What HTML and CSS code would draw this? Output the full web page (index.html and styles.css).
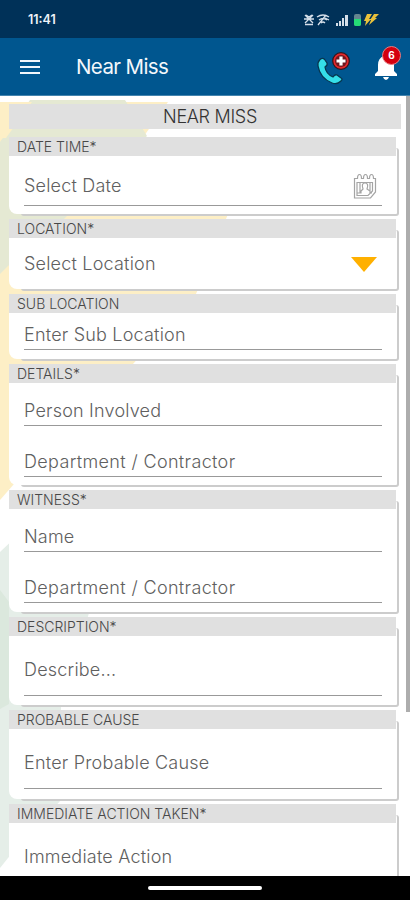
FILE: index.html
```html
<!DOCTYPE html>
<html lang="en">
<head>
    <meta charset="UTF-8">
    <meta name="viewport" content="width=device-width, initial-scale=1.0">
    <title>Near Miss</title>
    <link rel="stylesheet" href="styles.css">
</head>
<body>
    <div class="status-bar">
        <span class="clock">11:41</span>
        <svg class="status-icons" width="78" height="16" viewBox="0 0 78 16">
            <g fill="none" stroke="#d5dfe9" stroke-width="1.3">
                <path d="M3 3l8 8M11 3l-8 8M2 7h10M3 12.500h8M4 3l3 2 3-2"/>
                <path d="M15 5q6-4 12 0M17 8q4-3 8 0M19 11q2-2 4 0M16 13l8-10M23 6l4 2"/>
            </g>
            <path fill="#d5dfe9" d="M34 11h2v3h-2zM37 9h2v5h-2zM40 6h2v8h-2zM43 3h3v11h-3z"/>
            <rect x="52" y="2" width="7" height="12" rx="2" fill="#64858f"/>
            <path fill="#25dc75" d="M52 7h7v5q0 2-2 2h-3q-2 0-2-2z"/>
            <path fill="#eac23b" d="M65 2h5l-3 5h2l-6 7 1-5h-2zM72 2h5l-4 4h2l-8 7 2-5h-1z"/>
        </svg>
    </div>
    <header class="app-bar">
        <svg class="menu" width="20" height="16" viewBox="0 0 20 16">
            <path d="M0 2h20M0 8h20M0 14h20" stroke="#f1f6fb" stroke-width="2"/>
        </svg>
        <h1>Near Miss</h1>
        <svg class="phone" width="36" height="36" viewBox="0 0 36 36">
            <path d="M4 9.500Q7 7 9 10l2 3q1 2-2 4 1 7 8 10 2-3 4-2l4 3q2 1 0 3-4 4-9 2Q4 28 2 16q-.5-4 2-6.500z" fill="#35dfe8" stroke="#07364f" stroke-width="1.300"/>
            <circle cx="25" cy="11" r="8.300" fill="#e4282b" stroke="#35141c" stroke-width="1.200"/>
            <circle cx="25" cy="11" r="6" fill="#6f1720"/>
            <path d="M25 6.500v9M20.500 11h9" stroke="#fff" stroke-width="3.200"/>
        </svg>
        <div class="bell">
            <svg width="24" height="27" viewBox="0 0 24 27">
                <path d="M12 1q-2 0-2 2Q4 5 4 12v6l-3 3v2h22v-2l-3-3v-6q0-7-6-9 0-2-2-2zM9 24h6q-1 3-3 3t-3-3z" fill="#fff"/>
            </svg>
            <span class="badge">6</span>
        </div>
    </header>
    <main>
        <svg class="backdrop" width="410" height="780" viewBox="0 0 410 780">
            <path d="M0 6h168l-24 34 84 78-32 80-63 70L14 388 0 404z" fill="#fdefc6"/>
            <path d="M0 46L30 4h95l22 36-85 85L8 170 0 178z" fill="#e5e9d3"/>
            <path d="M0 6h32L6 42H0z" fill="#fdefc6"/>
            <path d="M0 456l18-17h48l23 78-28 92v95L8 762 0 772z" fill="#e5eee8"/>
            <path d="M0 494l9 12v102l-9 5z" fill="#dbe8dd"/>
        </svg>
        <div class="form">
            <h2>NEAR MISS</h2>
            <section class="card date">
                <h3>DATE TIME*</h3>
                <div class="field">
                    Select Date
                    <svg width="24" height="26" viewBox="0 0 24 26" fill="none" stroke="#a4a4a4" stroke-width="1.200">
                        <path d="M1.500 5.500h3q0-4 2-4t2 4h2q0-4 2-4t2 4h2q0-4 2-4t2 4h2V19l-5 6h-16z"/>
                        <path d="M4 9.500h15.500V18L15 22.500H4zM4 20h4v-2l2-2q-2-6 2-6t2 6l3 2v2h2M7 10v10M17 10v8"/>
                    </svg>
                </div>
            </section>
            <section class="card location">
                <h3>LOCATION*</h3>
                <div class="field">Select Location <span class="arrow"></span></div>
            </section>
            <section class="card sub">
                <h3>SUB LOCATION</h3>
                <div class="field">Enter Sub Location</div>
            </section>
            <section class="card person">
                <h3>DETAILS*</h3>
                <div class="field">Person Involved</div>
                <div class="field">Department / Contractor</div>
            </section>
            <section class="card person">
                <h3>WITNESS*</h3>
                <div class="field">Name</div>
                <div class="field">Department / Contractor</div>
            </section>
            <section class="card text">
                <h3>DESCRIPTION*</h3>
                <div class="field">Describe...</div>
            </section>
            <section class="card text">
                <h3>PROBABLE CAUSE</h3>
                <div class="field">Enter Probable Cause</div>
            </section>
            <section class="card text">
                <h3>IMMEDIATE ACTION TAKEN*</h3>
                <div class="field">Immediate Action</div>
            </section>
        </div>
        <div class="scrollbar"></div>
    </main>
    <footer class="nav-bar"><span></span></footer>
</body>
</html>
```
FILE: styles.css
```css
* {
    box-sizing: border-box;
}
body {
    margin: 0;
    height: 900px;
    display: flex;
    flex-direction: column;
    overflow: hidden;
    font-family: Inter, sans-serif;
    background: #fff;
}
h1, h2, h3 {
    margin: 0;
    font-weight: 400;
}
.status-bar {
    height: 38px;
    flex: none;
    display: flex;
    justify-content: space-between;
    align-items: center;
    padding: 1px 30px 0 28px;
    background: #003158;
}
.clock {
    color: #eef3f8;
    font-size: 12.5px;
    font-weight: 600;
}
.app-bar {
    height: 58px;
    flex: none;
    display: flex;
    align-items: center;
    padding: 0 12px 0 20px;
    background: #00568f;
    border-bottom: 1px solid #4384ae;
}
.app-bar h1 {
    margin-left: 36px;
    flex: 1;
    color: #f4f8fc;
    font-size: 20.5px;
    letter-spacing: -0.6px;
}
.phone {
    margin-top: 2px;
}
.bell {
    position: relative;
    height: 27px;
    margin-left: 22px;
}
.badge {
    position: absolute;
    top: -7px;
    left: 8px;
    width: 19px;
    height: 19px;
    border: 1px solid #e87b80;
    border-radius: 50%;
    background: #d4000e;
    color: #fff;
    font-size: 10px;
    font-weight: 700;
    line-height: 17px;
    text-align: center;
}
main {
    position: relative;
    flex: 1;
    min-height: 0;
    overflow: hidden;
}
.backdrop {
    position: absolute;
    top: 0;
    left: 0;
}
.form {
    position: relative;
    z-index: 0;
    padding: 8px 9px 0;
}
.form h2 {
    height: 25px;
    margin-bottom: 8px;
    padding-left: 10px;
    background: #e0e0e0;
    color: #333;
    font-size: 18px;
    font-weight: 300;
    line-height: 25px;
    text-align: center;
    letter-spacing: -0.3px;
}
.card {
    position: relative;
    width: 387px;
    margin-bottom: 5px;
    border-radius: 0 0 8px 8px;
    background: #fff;
}
/* thin offset edge on the right and bottom */
.card::after {
    content: "";
    position: absolute;
    z-index: -1;
    top: 11px;
    left: 12px;
    right: -3px;
    bottom: -2px;
    border: solid rgba(0, 0, 0, 0.2);
    border-width: 0 2px 2px 0;
    border-radius: 3px;
    background: #fff;
}
.card h3 {
    height: 19px;
    padding-left: 8px;
    background: #e0e0e0;
    color: #484848;
    font-size: 14px;
    line-height: 19px;
    font-weight: 300;
}
.field {
    display: flex;
    justify-content: space-between;
    margin: 0 14px 0 15px;
    border-bottom: 1px solid #999;
    color: #606060;
    font-size: 18px;
    font-weight: 300;
    line-height: 26px;
    letter-spacing: 0.2px;
}
.date {
    height: 77px;
}
.date .field {
    padding: 17px 5px 6px 0;
}
.location {
    height: 69.5px;
}
.location .field {
    border: none;
    padding: 13px 5px 0 0;
    align-items: center;
}
.arrow {
    border: 13px solid transparent;
    border-top: 15px solid #ffb000;
    border-bottom: none;
}
.sub {
    height: 65px;
}
.sub .field {
    padding: 9.5px 0 1px;
}
.person {
    height: 121.5px;
}
.person .field {
    padding: 15px 0 1px;
}
.person .field + .field {
    padding-top: 23px;
    letter-spacing: 0.35px;
}
.text {
    height: 88.5px;
}
.text .field {
    padding: 21px 0 12px;
}
.scrollbar {
    position: absolute;
    top: 0;
    right: 0;
    width: 4px;
    height: 616px;
    background: #adadad;
}
.nav-bar {
    height: 24px;
    flex: none;
    display: flex;
    justify-content: center;
    align-items: center;
    background: #000;
}
.nav-bar span {
    width: 114px;
    height: 4px;
    border-radius: 2px;
    background: #fff;
}
```
